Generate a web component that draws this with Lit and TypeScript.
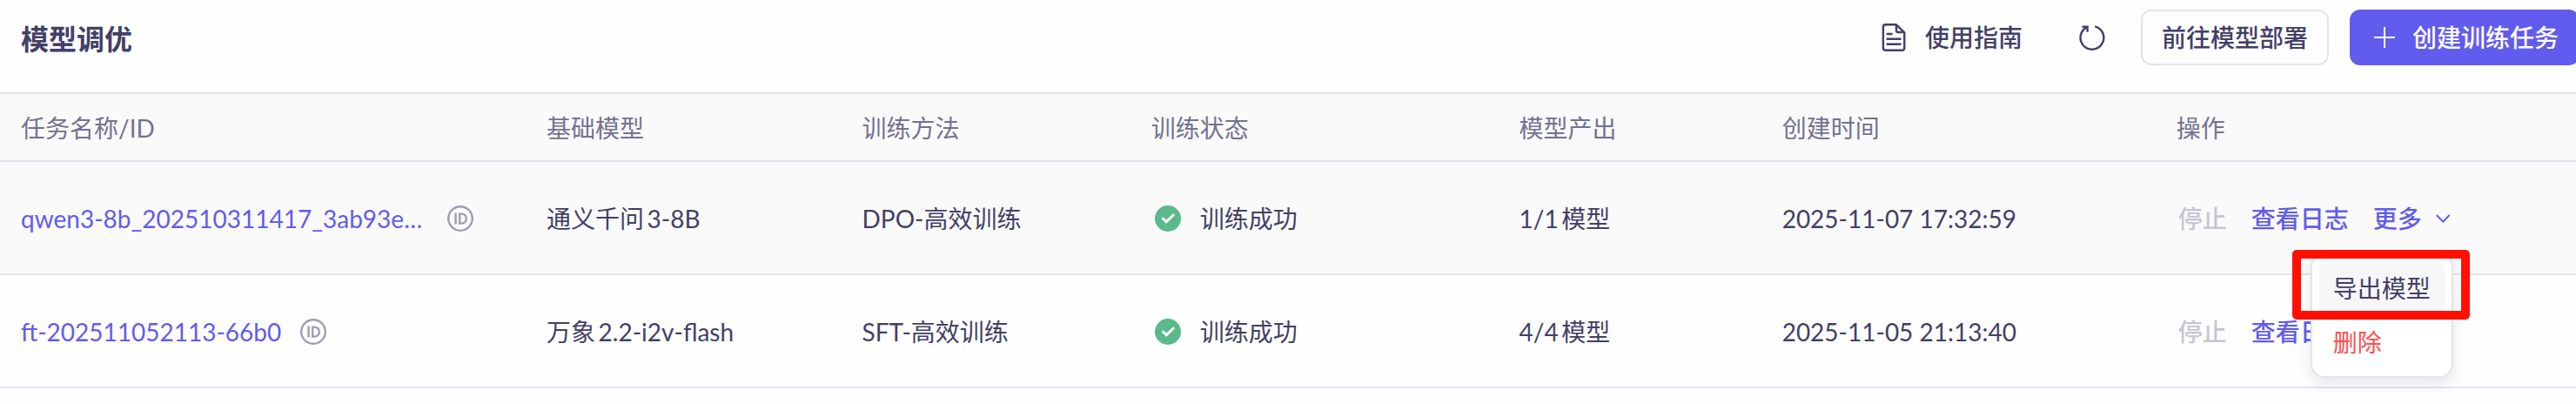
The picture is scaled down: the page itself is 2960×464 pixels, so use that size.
import { LitElement, html, css, svg } from "lit";
import { customElement, state } from "lit/decorators.js";
import { classMap } from "lit/directives/class-map.js";

interface Column {
  label: string;
  share: number;
}

interface Task {
  name: string;
  model: string;
  method: string;
  status: string;
  output: string;
  created: string;
  menuOpen: boolean;
}

const columns: Column[] = [
  { label: "任务名称/ID", share: 20 },
  { label: "基础模型", share: 12 },
  { label: "训练方法", share: 11 },
  { label: "训练状态", share: 14 },
  { label: "模型产出", share: 10 },
  { label: "创建时间", share: 15 },
  { label: "操作", share: 16 },
];
const totalShare = columns.reduce((sum, c) => sum + c.share, 0);

const docIcon = html`<svg class="icon" width="32" height="32" viewBox="0 0 32 32" aria-hidden="true">
  ${svg`<path d="M6.500 1.300H19L28.300 10.400V28a2.700 2.700 0 0 1-2.700 2.700H6.600A2.700 2.700 0 0 1 3.900 28V4a2.700 2.700 0 0 1 2.600-2.700zM19 1.500V8a2 2 0 0 0 2 2h7" stroke-linejoin="round"/><path d="M8.600 12h5M8.600 17.800h15M8.600 23.800h15" stroke-linecap="round"/>`}
</svg>`;

const refreshIcon = html`<svg class="icon" width="32" height="32" viewBox="0 0 32 32" aria-hidden="true">
  ${svg`<path d="M19.200 3.300A13.400 13.400 0 1 1 10.400 4.100M4.400 3.600h6.200v6.200"/>`}
</svg>`;

const plusIcon = html`<svg class="icon" width="28" height="28" viewBox="0 0 28 28" aria-hidden="true">
  ${svg`<path d="M16 2v24M4 14h24"/>`}
</svg>`;

const idIcon = html`<svg class="id-icon" width="30" height="30" viewBox="0 0 30 30" aria-hidden="true">
  ${svg`<circle cx="15" cy="15" r="13.800"/><path d="M9.600 8.600v13M14.200 9.600h2.200a5.500 5.500 0 0 1 0 11h-2.200z"/>`}
</svg>`;

const successIcon = html`<svg width="38" height="38" viewBox="0 0 38 38" aria-hidden="true">
  ${svg`<circle cx="19" cy="19" r="15" fill="#5bb98b"/><path d="M13.400 19l3.800 3.800 8-7.800" fill="none" stroke="#fff" stroke-width="3" stroke-linecap="round"/>`}
</svg>`;

const chevronIcon = html`<svg class="icon" width="20" height="20" viewBox="0 0 20 20" aria-hidden="true">
  ${svg`<path d="M2.800 6l7.400 7.600L17.600 6"/>`}
</svg>`;

@customElement("app-root")
export class AppRoot extends LitElement {
  static styles = css`
    :host {
      display: block;
      overflow: hidden;
      min-height: 100vh;
      background: #fefefe;
      color: #433f66;
      font-family: Lato, "Noto Sans CJK SC", sans-serif;
      font-size: 28px;
      line-height: 40px;
      text-autospace: normal;
    }
    button,
    a {
      font: inherit;
      color: inherit;
      text-decoration: none;
      text-autospace: inherit;
    }
    button {
      margin: 0;
      padding: 0;
      border: 0;
      background: none;
      cursor: pointer;
    }
    .icon {
      display: block;
      fill: none;
      stroke: currentColor;
      stroke-width: 2;
    }
    .bar {
      display: flex;
      align-items: center;
      justify-content: space-between;
      box-sizing: border-box;
      height: 106px;
      padding: 0 0 20px 24px;
      margin-right: -4px;
    }
    .title {
      margin: 0;
      padding-top: 4px;
      font-size: 32px;
      font-weight: 700;
    }
    .tools {
      display: flex;
      align-items: center;
      font-weight: 500;
    }
    .guide {
      display: flex;
      align-items: center;
      gap: 20px;
      margin-right: 64px;
    }
    .guide .icon,
    .refresh .icon {
      stroke-width: 2.4;
    }
    .refresh {
      margin-right: 40px;
    }
    .button {
      display: flex;
      align-items: center;
      gap: 20px;
      box-sizing: border-box;
      height: 64px;
      padding: 0 22px;
      border: 2px solid #e4e3ec;
      border-radius: 12px;
      white-space: nowrap;
    }
    .primary {
      margin-left: 24px;
      border-color: #615ced;
      background: #615ced;
      color: #fff;
    }
    table {
      width: 100%;
      table-layout: fixed;
      border-collapse: separate;
      border-spacing: 0;
      border-top: 2px solid #e4e3ec;
    }
    th,
    td {
      box-sizing: border-box;
      padding: 2px 0 0 24px;
      border-bottom: 2px solid #e4e3ec;
      text-align: left;
      white-space: nowrap;
      font-weight: 400;
    }
    th {
      height: 78px;
      background: #fafafa;
      color: #737192;
    }
    td {
      height: 130px;
    }
    .active td {
      background: #fafafa;
    }
    .name,
    .status,
    .actions {
      display: flex;
      align-items: center;
    }
    .name {
      gap: 22px;
      color: #615ced;
    }
    .clipped {
      width: 468px;
      overflow: hidden;
    }
    .id-icon {
      display: block;
      fill: none;
      stroke: #9f9db4;
      stroke-width: 2.4;
    }
    .status {
      gap: 18px;
    }
    .actions {
      gap: 28px;
      padding-left: 2px;
      color: #615ced;
      font-weight: 500;
    }
    .actions button:disabled {
      color: #c6c5d1;
      cursor: default;
    }
    .more {
      position: relative;
    }
    .more-button {
      display: flex;
      align-items: center;
      gap: 14px;
    }
    .menu {
      position: absolute;
      z-index: 1;
      top: 59px;
      left: -72px;
      display: flex;
      flex-direction: column;
      box-sizing: border-box;
      width: 164px;
      padding: 8px;
      border: 2px solid #e4e3ec;
      border-radius: 16px;
      background: #fff;
      box-shadow: 0 8px 16px rgba(38, 36, 76, 0.1);
      color: #433f66;
    }
    .item {
      height: 62px;
      padding-left: 16px;
      border-radius: 8px;
      text-align: left;
      font-weight: 400;
    }
    .item.hovered {
      background: #f7f7fa;
    }
    .item.danger {
      color: #ff4d4f;
    }
    .highlight {
      position: absolute;
      top: -5px;
      left: -23px;
      box-sizing: border-box;
      width: 204px;
      height: 80px;
      border: 10px solid #ff1000;
      border-radius: 5px;
      pointer-events: none;
    }
  `;

  @state() private tasks: Task[] = [
    {
      name: "qwen3-8b_202510311417_3ab93e…",
      model: "通义千问3-8B",
      method: "DPO-高效训练",
      status: "训练成功",
      output: "1/1模型",
      created: "2025-11-07 17:32:59",
      menuOpen: true,
    },
    {
      name: "ft-202511052113-66b0",
      model: "万象2.2-i2v-flash",
      method: "SFT-高效训练",
      status: "训练成功",
      output: "4/4模型",
      created: "2025-11-05 21:13:40",
      menuOpen: false,
    },
  ];

  private toggleMenu(task: Task) {
    this.tasks = this.tasks.map((t) => ({ ...t, menuOpen: t === task && !t.menuOpen }));
  }

  private renderMenu() {
    return html`<div class="menu" role="menu">
      <button class="item hovered" role="menuitem">导出模型</button>
      <button class="item danger" role="menuitem">删除</button>
      <div class="highlight"></div>
    </div>`;
  }

  private renderTask(task: Task) {
    return html`<tr class=${classMap({ active: task.menuOpen })}>
      <td>
        <div class="name">
          <a class=${classMap({ clipped: task.name.endsWith("…") })} href="#">${task.name}</a>
          <button aria-label="ID">${idIcon}</button>
        </div>
      </td>
      <td>${task.model}</td>
      <td>${task.method}</td>
      <td><div class="status">${successIcon}<span>${task.status}</span></div></td>
      <td>${task.output}</td>
      <td>${task.created}</td>
      <td>
        <div class="actions">
          <button disabled>停止</button>
          <a href="#">查看日志</a>
          <div class="more">
            <button class="more-button" aria-haspopup="menu" @click=${() => this.toggleMenu(task)}>
              更多${chevronIcon}
            </button>
            ${task.menuOpen ? this.renderMenu() : ""}
          </div>
        </div>
      </td>
    </tr>`;
  }

  render() {
    return html`
      <header class="bar">
        <h1 class="title">模型调优</h1>
        <div class="tools">
          <a class="guide" href="#">${docIcon}<span>使用指南</span></a>
          <button class="refresh" aria-label="刷新">${refreshIcon}</button>
          <button class="button">前往模型部署</button>
          <button class="button primary">${plusIcon}<span>创建训练任务</span></button>
        </div>
      </header>
      <table>
        <colgroup>
          ${columns.map((c) => html`<col style="width:${(c.share / totalShare) * 100}%" />`)}
        </colgroup>
        <thead>
          <tr>${columns.map((c) => html`<th scope="col">${c.label}</th>`)}</tr>
        </thead>
        <tbody>${this.tasks.map((t) => this.renderTask(t))}</tbody>
      </table>
    `;
  }
}
